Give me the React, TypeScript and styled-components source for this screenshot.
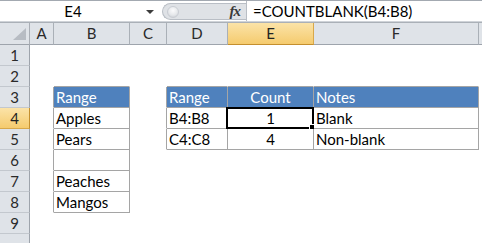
import { FC } from 'react'
import styled, { createGlobalStyle, css } from 'styled-components'

const GlobalStyle = createGlobalStyle`
  html, body {
    margin: 0;
    padding: 0;
    background: #ffffff;
  }
  body {
    font-family: Lato, 'Liberation Sans', sans-serif;
    overflow: hidden;
  }
`

// G and row 10 only peek in at the window edge, so they carry no label
const COLS = ['A', 'B', 'C', 'D', 'E', 'F', 'G']
const ROWS = [1, 2, 3, 4, 5, 6, 7, 8, 9, 10]
const LAST_COL = 'G'
const LAST_ROW = 10
const ACTIVE_COL = 'E'
const ACTIVE_ROW = 4

type CellData = { text: string; head?: boolean; center?: boolean }

const DATA: Record<string, CellData> = {
  B3: { text: 'Range', head: true },
  B4: { text: 'Apples' },
  B5: { text: 'Pears' },
  B6: { text: '' },
  B7: { text: 'Peaches' },
  B8: { text: 'Mangos' },
  D3: { text: 'Range', head: true },
  E3: { text: 'Count', head: true, center: true },
  F3: { text: 'Notes', head: true },
  D4: { text: 'B4:B8' },
  E4: { text: '1', center: true },
  F4: { text: 'Blank' },
  D5: { text: 'C4:C8' },
  E5: { text: '4', center: true },
  F5: { text: 'Non-blank' },
}

const inTable = (col: string, row: number) => `${col}${row}` in DATA

const Window = styled.div`
  width: 482px;
  height: 243px;
  overflow: hidden;
  display: flex;
  flex-direction: column;
  background: #ffffff;
  font-size: 15px;
  color: #000000;
`

const FormulaBar = styled.div`
  display: flex;
  height: 20px;
  border-top: 1px solid #a3a9b1;
  background: #ffffff;
`

const NameBox = styled.div`
  width: 160px;
  display: flex;
  align-items: center;
`

const NameText = styled.div`
  flex: 1;
  text-align: center;
  line-height: 20px;
`

const DropArrow = styled.div`
  width: 0;
  height: 0;
  margin: 1px 6px 0 0;
  border-left: 4px solid transparent;
  border-right: 4px solid transparent;
  border-top: 4px solid #3c3c3c;
`

const FxArea = styled.div`
  width: 84px;
  margin: 2px 0 0 2px;
  height: 17px;
  display: flex;
  align-items: center;
  justify-content: space-between;
  padding: 0 6px 0 4px;
  box-sizing: border-box;
  background: #dfe2e6;
  border: 1px solid #b9bec5;
  border-right: none;
  border-radius: 9px 0 0 9px;
`

const Grip = styled.div`
  width: 10px;
  height: 10px;
  border-radius: 50%;
  background: radial-gradient(circle at 50% 35%, #fbfbfc 0%, #e6e8eb 55%, #c4c8ce 100%);
  border: 1px solid #c9cdd3;
`

const FxGlyph = styled.span`
  font-family: 'Liberation Serif', serif;
  font-style: italic;
  font-weight: bold;
  font-size: 15px;
  color: #3a3a3a;
  letter-spacing: -1px;
`

const FormulaInput = styled.div`
  flex: 1;
  border-left: 1px solid #b9bec5;
  padding-left: 6px;
  line-height: 20px;
  white-space: nowrap;
`

const Band = styled.div`
  height: 3px;
  border-top: 1px solid #cfd3d8;
  border-bottom: 1px solid #aab0b7;
  background: #eef0f2;
`

const Sheet = styled.div`
  display: grid;
  grid-template-columns: 30px 24px 76px 37px 61px 86px 165px 1fr;
  grid-template-rows: 22px;
  grid-auto-rows: 21px;
`

const headActive = css`
  background: linear-gradient(#fbe3a8, #f5cb6e);
  color: #222222;
`

const Corner = styled.div`
  background: #dfe3e8;
  border-right: 1px solid #a9aeb5;
  border-bottom: 1px solid #9ea4ac;
  display: flex;
  align-items: flex-end;
  justify-content: flex-end;
  padding: 0 3px 4px 0;
`

const ColHead = styled.div<{ $active?: boolean }>`
  background: #dfe3e8;
  border-right: 1px solid ${({ $active }) => ($active ? '#d8a84a' : '#aab0b7')};
  border-bottom: 1px solid ${({ $active }) => ($active ? '#c48f2e' : '#9ea4ac')};
  text-align: center;
  line-height: 21px;
  color: #2a2a2a;
  overflow: hidden;
  ${({ $active }) => $active && headActive}
`

const RowHead = styled.div<{ $active?: boolean }>`
  background: #dfe3e8;
  border-right: 1px solid ${({ $active }) => ($active ? '#c48f2e' : '#9ea4ac')};
  border-bottom: 1px solid ${({ $active }) => ($active ? '#d8a84a' : '#c3c8ce')};
  text-align: center;
  line-height: 20px;
  color: #2a2a2a;
  ${({ $active }) => $active && headActive}
`

const Cell = styled.div<{ $right: boolean; $bottom: boolean; $head?: boolean; $center?: boolean }>`
  position: relative;
  border-right: 1px solid ${({ $right }) => ($right ? '#a5a5a5' : '#ffffff')};
  border-bottom: 1px solid ${({ $bottom }) => ($bottom ? '#a5a5a5' : '#ffffff')};
  background: ${({ $head }) => ($head ? '#4f81bd' : '#ffffff')};
  color: ${({ $head }) => ($head ? '#ffffff' : '#000000')};
  text-align: ${({ $center }) => ($center ? 'center' : 'left')};
  padding: 0 2px;
  line-height: 20px;
  white-space: nowrap;
`

const Selection = styled.div`
  position: absolute;
  left: -2px;
  top: -1px;
  right: -1px;
  bottom: -1px;
  border: 2px solid #000000;
  pointer-events: none;
`

const FillHandle = styled.div`
  position: absolute;
  right: -4px;
  bottom: -4px;
  width: 5px;
  height: 5px;
  background: #000000;
  border: 1px solid #ffffff;
`

const CornerTriangle: FC = () => (
  <svg width="13" height="12" viewBox="0 0 13 12">
    <polygon points="13,0 13,12 0,12" fill="#b7bcc3" />
  </svg>
)

const RowCells: FC<{ row: number }> = ({ row }) => (
  <>
    <RowHead $active={row === ACTIVE_ROW}>{row === LAST_ROW ? '' : row}</RowHead>
    {COLS.map((c, i) => {
      const data = DATA[`${c}${row}`]
      const next = COLS[i + 1]
      const right = inTable(c, row) || (!!next && inTable(next, row))
      const bottom = inTable(c, row) || inTable(c, row + 1)
      const active = c === ACTIVE_COL && row === ACTIVE_ROW
      return (
        <Cell key={c} $right={right} $bottom={bottom} $head={data?.head} $center={data?.center}>
          {data?.text}
          {active && (
            <Selection>
              <FillHandle />
            </Selection>
          )}
        </Cell>
      )
    })}
  </>
)

export default function App() {
  return (
    <>
      <GlobalStyle />
      <Window>
        <FormulaBar>
          <NameBox>
            <NameText>E4</NameText>
            <DropArrow />
          </NameBox>
          <FxArea>
            <Grip />
            <FxGlyph>fx</FxGlyph>
          </FxArea>
          <FormulaInput>=COUNTBLANK(B4:B8)</FormulaInput>
        </FormulaBar>
        <Band />
        <Sheet>
          <Corner>
            <CornerTriangle />
          </Corner>
          {COLS.map((c) => (
            <ColHead key={c} $active={c === ACTIVE_COL}>
              {c === LAST_COL ? '' : c}
            </ColHead>
          ))}
          {ROWS.map((r) => (
            <RowCells key={r} row={r} />
          ))}
        </Sheet>
      </Window>
    </>
  )
}
